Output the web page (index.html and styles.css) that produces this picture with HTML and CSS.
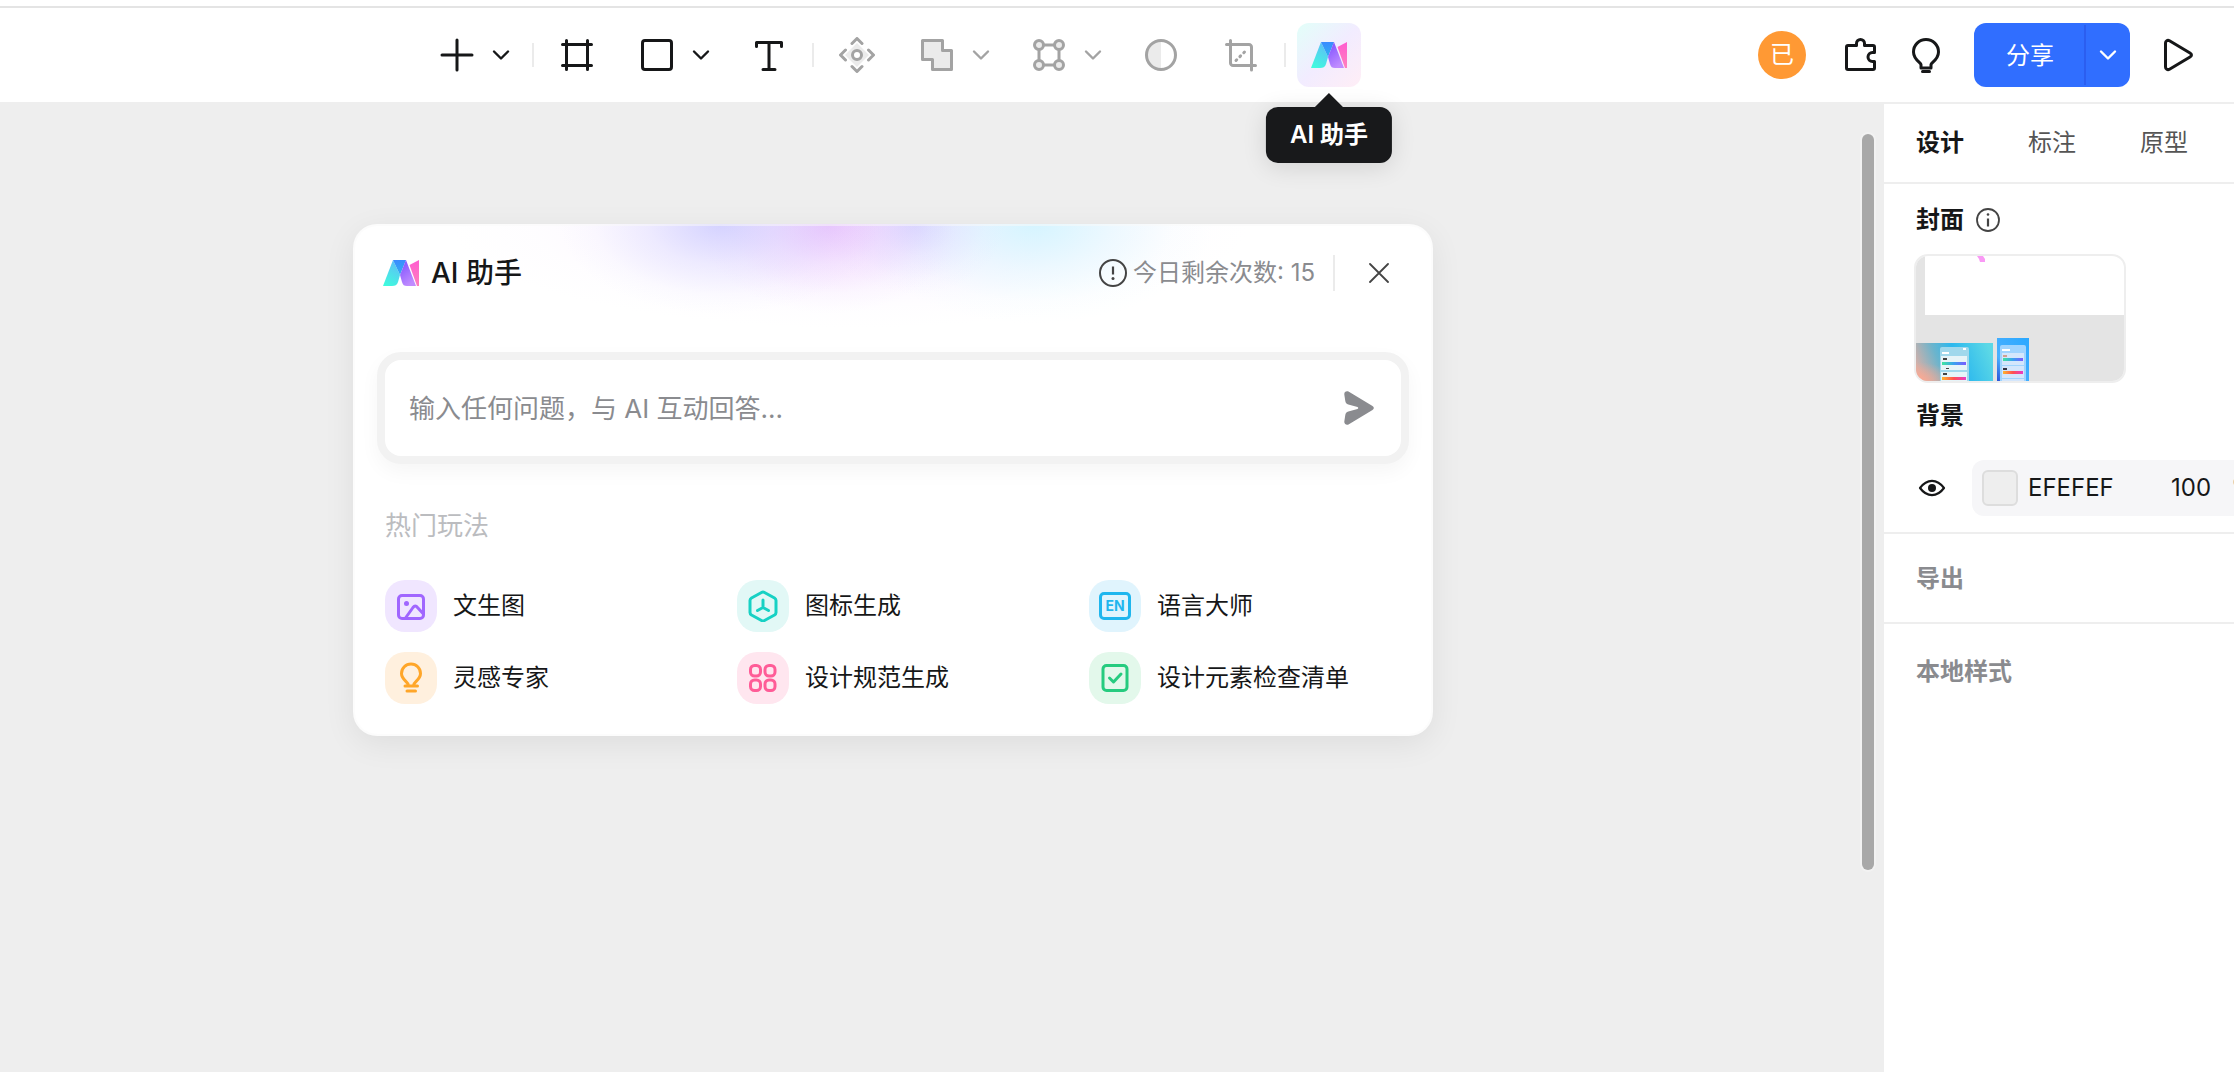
FILE: index.html
```html
<!DOCTYPE html>
<html lang="zh-CN">
<head>
<meta charset="utf-8">
<title>AI 助手</title>
<link rel="stylesheet" href="styles.css">
</head>
<body>
<svg class="defs" width="0" height="0" aria-hidden="true">
  <defs>
    <linearGradient id="g-left" x1="0" y1="1" x2="0.4" y2="0"><stop offset="0" stop-color="#3dffdc"/><stop offset="1" stop-color="#5cc4f5"/></linearGradient>
    <linearGradient id="g-top" x1="0" y1="0" x2="0" y2="1"><stop offset="0" stop-color="#3a8bff"/><stop offset="1" stop-color="#2fb0f0"/></linearGradient>
    <linearGradient id="g-mid" x1="0" y1="0" x2="0.5" y2="1"><stop offset="0" stop-color="#7a4dff"/><stop offset="1" stop-color="#c08cff"/></linearGradient>
    <linearGradient id="g-right" x1="0" y1="0" x2="0" y2="1"><stop offset="0" stop-color="#ff5cd0"/><stop offset="1" stop-color="#ff80bd"/></linearGradient>
    <symbol id="logo" viewBox="0 0 36 26">
      <path d="M10 0 0 26h9c3 0 5-1 6-4l2-7z" fill="url(#g-left)"/>
      <path d="M10 0h13l-6 15z" fill="url(#g-top)"/>
      <path d="M23 0 33 26h-9c-3 0-4-1-5-4l-2-7z" fill="url(#g-mid)"/>
      <path d="M36 0v26h-2L26.500 5z" fill="url(#g-right)"/>
    </symbol>
    <symbol id="chevron" viewBox="0 0 24 24">
      <path d="m5 8.500 7 7 7-7" fill="none" stroke="currentColor" stroke-width="2.400" stroke-linecap="round" stroke-linejoin="round"/>
    </symbol>
  </defs>
</svg>

<header class="topbar">
  <nav class="tools" aria-label="工具">
    <div class="split">
      <button class="tool" aria-label="添加"><svg width="36" height="36" viewBox="0 0 36 36"><path d="M18 3v30M3 18h30"/></svg></button>
      <button class="more" aria-label="更多添加"><svg width="24" height="24"><use href="#chevron"/></svg></button>
    </div>
    <span class="rule"></span>
    <button class="tool" aria-label="容器"><svg width="36" height="36" viewBox="0 0 36 36"><path d="M7.500 3.500v29M28.500 3.500v29M3.500 7.500h29M3.500 28.500h29"/></svg></button>
    <div class="split">
      <button class="tool" aria-label="矩形"><svg width="36" height="36" viewBox="0 0 36 36"><rect x="3.500" y="3.500" width="29" height="29" rx="2.500"/></svg></button>
      <button class="more" aria-label="更多形状"><svg width="24" height="24"><use href="#chevron"/></svg></button>
    </div>
    <button class="tool" aria-label="文本"><svg width="36" height="36" viewBox="0 0 36 36"><path d="M5.500 9.500v-4h25v4M18 5.500v27M12 32.500h12"/></svg></button>
    <span class="rule"></span>
    <button class="tool off" aria-label="组件"><svg width="36" height="36" viewBox="0 0 36 36"><path class="tint" d="M18 6 30 18 18 30 6 18z"/><circle cx="18" cy="18" r="4.500" class="blank"/><path d="m13 6.500 5-5 5 5M13 29.500l5 5 5-5M6.500 13l-5 5 5 5M29.500 13l5 5-5 5"/></svg></button>
    <div class="split">
      <button class="tool off" aria-label="布尔运算"><svg width="36" height="36" viewBox="0 0 36 36"><path class="fill" d="M3.500 3.500h20v10h9v19h-19v-10h-10z"/></svg></button>
      <button class="more off" aria-label="更多布尔运算"><svg width="24" height="24"><use href="#chevron"/></svg></button>
    </div>
    <div class="split">
      <button class="tool off" aria-label="编辑路径"><svg width="36" height="36" viewBox="0 0 36 36"><path d="M8 8h20v20H8z"/><circle class="fill" cx="8" cy="8" r="4.500"/><circle class="fill" cx="28" cy="8" r="4.500"/><circle class="fill" cx="8" cy="28" r="4.500"/><circle class="fill" cx="28" cy="28" r="4.500"/></svg></button>
      <button class="more off" aria-label="更多路径操作"><svg width="24" height="24"><use href="#chevron"/></svg></button>
    </div>
    <button class="tool off" aria-label="蒙版"><svg width="36" height="36" viewBox="0 0 36 36"><path class="tint" d="M18 3a15 15 0 0 0 0 30z"/><circle cx="18" cy="18" r="14.500"/></svg></button>
    <button class="tool off" aria-label="裁剪"><svg width="36" height="36" viewBox="0 0 36 36"><path d="M3.500 7.500H26a2.500 2.500 0 0 1 2.500 2.500v23M7.500 3.500V26a2.500 2.500 0 0 0 2.500 2.500h22.500"/><path d="M13 23.500 24.500 12" stroke-dasharray="1 4.500"/></svg></button>
    <span class="rule"></span>
    <div class="ai-tool">
      <button class="ai-button" aria-label="AI 助手"><svg width="36" height="26"><use href="#logo"/></svg></button>
      <span class="tooltip" role="tooltip">AI 助手</span>
    </div>
  </nav>
  <div class="actions">
    <span class="avatar">已</span>
    <button class="action" aria-label="插件"><svg width="36" height="36" viewBox="0 0 36 36"><path d="M6 8.500h8.500V6.500a4 4 0 0 1 8 0v2h8.500a1.500 1.500 0 0 1 1.500 1.500v5.500h-2a4.500 4.500 0 0 0 0 9h2V31a1.500 1.500 0 0 1-1.500 1.500H6A1.500 1.500 0 0 1 4.500 31V10A1.500 1.500 0 0 1 6 8.500z"/></svg></button>
    <button class="action" aria-label="帮助"><svg width="36" height="36" viewBox="0 0 36 36"><path d="M13 31v-3.500c0-1.500-7.500-5-7.500-12.500a12.500 12.500 0 0 1 25 0c0 7.500-7.500 11-7.500 12.500V31zM14.500 34.500h7"/></svg></button>
    <div class="share">
      <button class="share-main">分享</button>
      <button class="share-more" aria-label="分享选项"><svg width="24" height="24"><use href="#chevron"/></svg></button>
    </div>
    <button class="action" aria-label="演示"><svg width="36" height="36" viewBox="0 0 36 36"><path d="M5.500 6v24c0 2 2 3.300 4 2.200L30 20c2-1.200 2-2.800 0-4L9.500 3.800C7.500 2.700 5.500 4 5.500 6z"/></svg></button>
  </div>
</header>

<div class="workspace">
  <main class="canvas">
    <section class="card" aria-labelledby="ai-title">
      <div class="card-head">
        <svg width="36" height="26"><use href="#logo"/></svg>
        <h1 class="card-title" id="ai-title">AI 助手</h1>
        <span class="quota"><svg width="28" height="28" viewBox="0 0 28 28"><circle cx="14" cy="14" r="13" fill="none" stroke="#444" stroke-width="2"/><path d="M14 7.500v8" stroke="#444" stroke-width="2.200"/><circle cx="14" cy="19.500" r="1.500" fill="#444"/></svg>今日剩余次数: 15</span>
        <span class="head-rule"></span>
        <button class="close" aria-label="关闭"><svg width="20" height="20" viewBox="0 0 20 20"><path d="M1 1l18 18M19 1 1 19" stroke="#444" stroke-width="1.800" stroke-linecap="round"/></svg></button>
      </div>
      <form class="ask">
        <input class="ask-input" type="text" aria-label="问题" placeholder="输入任何问题，与 AI 互动回答...">
        <button class="send" type="button" aria-label="发送"><svg width="32" height="36" viewBox="0 0 32 36"><path d="M5.500 1.600 29.500 16c1.800 1.200 1.800 2.800 0 4L5.500 34.400C3.500 35.400 1 34 1.300 31.600L2.300 25c.3-1.800 1.200-3.100 3-3.500L14.500 19c1-.4 1-1.600 0-2L5.300 14.500c-1.800-.4-2.700-1.700-3-3.500L1.300 4.400C1 2 3.500.6 5.500 1.600z" fill="#8a8b8f"/></svg></button>
      </form>
      <h2 class="hot">热门玩法</h2>
      <div class="plays">
        <button class="play"><span class="tile purple"><svg width="32" height="32" viewBox="0 0 32 32"><rect x="3.500" y="5.500" width="25" height="23" rx="3.500"/><circle cx="11.500" cy="13.500" r="2.500" fill="currentColor" stroke="none"/><path d="m10.500 28 7.500-10.500c1.500-2 3-2 4.500 0l5.500 6"/></svg></span>文生图</button>
        <button class="play"><span class="tile teal"><svg width="32" height="32" viewBox="0 0 32 32"><path d="M14.500 2.500 4.500 8Q3 9 3 10.500v12Q3 24 4.500 25l10 5.500q1.500.8 3 0l10-5.500q1.500-1 1.500-2.500v-12Q29 9 27.500 8l-10-5.500q-1.500-.8-3 0zM16 10v7.500M10.500 20.500l5.500-3 5.500 3"/></svg></span>图标生成</button>
        <button class="play"><span class="tile blue"><svg width="32" height="32" viewBox="0 0 32 32"><rect x="1.500" y="3.500" width="29" height="25" rx="3.500"/><text class="en" x="16" y="21">EN</text></svg></span>语言大师</button>
        <button class="play"><span class="tile orange"><svg width="32" height="32" viewBox="0 0 32 32"><path d="M13.500 23.500c0-4-7-5.500-7-12a9.500 9.500 0 0 1 19 0c0 6.500-7 8-7 12M10 24h12.500M12 29h8.500"/></svg></span>灵感专家</button>
        <button class="play"><span class="tile pink"><svg width="32" height="32" viewBox="0 0 32 32"><rect x="3.500" y="3.500" width="10" height="10.500" rx="4"/><rect x="18" y="3.500" width="10" height="10.500" rx="4"/><rect x="3.500" y="18" width="10" height="10.500" rx="4"/><rect x="18" y="18" width="10" height="10.500" rx="4"/></svg></span>设计规范生成</button>
        <button class="play"><span class="tile green"><svg width="32" height="32" viewBox="0 0 32 32"><rect x="4" y="3.500" width="24" height="25" rx="3.500"/><path d="m10.500 16 4 4 7.500-8"/></svg></span>设计元素检查清单</button>
      </div>
    </section>
    <span class="scroll-thumb"></span>
  </main>

  <aside class="panel">
    <div class="tabs">
      <button class="tab on">设计</button>
      <button class="tab">标注</button>
      <button class="tab">原型</button>
    </div>
    <section class="group page">
      <h2 class="group-title">封面 <svg width="24" height="24" viewBox="0 0 24 24"><circle cx="12" cy="12" r="11" fill="none" stroke="#444" stroke-width="1.800"/><circle cx="12" cy="6.500" r="1.300" fill="#444"/><path d="M12 10.500v8" stroke="#444" stroke-width="2.200"/></svg></h2>
      <div class="cover">
        <svg width="208" height="125" viewBox="0 0 208 125">
          <defs>
            <linearGradient id="c-a" x1="0" y1="0.600" x2="1" y2="0.400"><stop offset="0" stop-color="#d6b0a8"/><stop offset="0.300" stop-color="#6cb4cc"/><stop offset="0.550" stop-color="#2cb8ee"/><stop offset="1" stop-color="#5cd8e6"/></linearGradient>
            <radialGradient id="c-b" cx="0" cy="1" r="0.500"><stop offset="0" stop-color="#ffa890"/><stop offset="1" stop-color="#ffa890" stop-opacity="0"/></radialGradient>
            <linearGradient id="c-c" x1="1" y1="0" x2="0" y2="1"><stop offset="0" stop-color="#2aa8ff"/><stop offset="0.700" stop-color="#4ab0ff"/><stop offset="1" stop-color="#2a50d8"/></linearGradient>
            <linearGradient id="c-cool"><stop offset="0" stop-color="#3fe6a0"/><stop offset="0.500" stop-color="#3aa0f0"/><stop offset="1" stop-color="#7a5cff"/></linearGradient>
            <linearGradient id="c-warm"><stop offset="0" stop-color="#ffb52e"/><stop offset="0.500" stop-color="#ff4f50"/><stop offset="1" stop-color="#e83cc8"/></linearGradient>
          </defs>
          <path fill="#e4e4e4" d="M0 0h208v125H0z"/>
          <path fill="#fff" d="M9 0h199v59H9z"/>
          <path fill="#f99af5" d="M61 0h6l2 3v3h-5l-1-3z"/>
          <path fill="url(#c-a)" d="M0 87h77v38H0z"/><path fill="url(#c-b)" d="M0 87h77v38H0z"/>
          <path fill="#a0d8ec" d="M24 93q0-2 2-2h25q2 0 2 2v32H24z"/>
          <path fill="#e6f4f8" d="M25 100h26v14H25zM25 116h26v9H25z"/>
          <path fill="#fff" d="M26 96h7v2h-7zM47 92h3v2h-3z"/>
          <path fill="#444" d="M27 102h4v2h-4zM27 117h4v2h-4zM30 112h3v1h-3z"/>
          <path fill="url(#c-cool)" d="M26 106h24v3H26z"/><path fill="url(#c-warm)" d="M26 121h24v3H26z"/>
          <path fill="url(#c-c)" d="M81 82h32v43H81z"/>
          <path fill="#a0d4ff" d="M84 91q0-2 2-2h22q2 0 2 2v34H84z"/>
          <path fill="#d4e6fc" d="M86 97h22v12H86zM86 110h22v12H86zM86 123h22v2H86z"/>
          <path fill="#fff" d="M86 93h8v2h-8z"/>
          <path fill="#d0a090" d="M87 99h4v2h-4z"/><path fill="#334" d="M87 112h4v2h-4z"/>
          <path fill="url(#c-cool)" d="M87 102h20v3H87z"/><path fill="url(#c-warm)" d="M87 115h20v3H87z"/>
        </svg>
      </div>
      <h2 class="group-title">背景</h2>
      <div class="fill-row">
        <button class="eye" aria-label="显示背景"><svg width="28" height="20" viewBox="0 0 28 20"><path d="M2 10c7-9.500 17-9.500 24 0-7 9.500-17 9.500-24 0z" fill="none" stroke="#161718" stroke-width="2.200" stroke-linejoin="round"/><circle cx="14" cy="10" r="4" fill="#161718"/></svg></button>
        <div class="field">
          <button class="swatch" aria-label="背景颜色"></button>
          <input class="hex" type="text" aria-label="色值" value="EFEFEF">
          <input class="alpha" type="text" aria-label="不透明度" value="100">
          <span class="unit">%</span>
        </div>
      </div>
    </section>
    <section class="group"><h2 class="group-title muted">导出</h2></section>
    <section class="group last"><h2 class="group-title muted">本地样式</h2></section>
  </aside>
</div>
</body>
</html>
```

FILE: styles.css
```css
* { box-sizing: border-box; }

body {
  margin: 0;
  height: 100vh;
  display: flex;
  flex-direction: column;
  overflow: hidden;
  background: #fff;
  color: #161718;
  font: 24px/36px Inter, "Noto Sans CJK SC", sans-serif;
}

button, input { font: inherit; color: inherit; border: 0; background: none; padding: 0; margin: 0; }
button { cursor: pointer; display: flex; align-items: center; justify-content: center; }
h1, h2 { margin: 0; font-size: inherit; }
svg { display: block; flex: none; }
.defs { position: absolute; }

/* Top bar */
.topbar {
  margin-top: 6px;
  border-top: 2px solid #e4e4e4;
  border-bottom: 2px solid #eee;
  padding: 15px 38px 15px 28px;
  display: flex;
  align-items: center;
}
.tools { flex: 1; display: flex; align-items: center; justify-content: center; gap: 16px; }
.split { display: flex; padding-right: 8px; }
.tool { width: 64px; height: 64px; }
.more { width: 24px; height: 64px; }
.tool svg, .action svg {
  fill: none;
  stroke: currentColor;
  stroke-width: 3;
  stroke-linecap: round;
  stroke-linejoin: round;
}
.off { color: #a3a3a3; }
.tool .fill { fill: #ebebeb; }
.tool .tint { fill: #ebebeb; stroke: none; }
.tool .blank { fill: #fff; }
.rule { width: 2px; height: 24px; margin: 0 -5px; background: #ebebeb; }

.ai-tool { position: relative; z-index: 2; }
.ai-button {
  width: 64px;
  height: 64px;
  border-radius: 12px;
  background: linear-gradient(135deg, #e2fff9, #f2ecff 50%, #ffeef6);
}
.tooltip {
  position: absolute;
  top: 84px;
  left: 50%;
  transform: translateX(-50%);
  padding: 10px 24px;
  border-radius: 12px;
  background: #18191b;
  color: #fff;
  font-weight: 600;
  white-space: nowrap;
  box-shadow: 0 4px 24px rgba(0, 0, 0, 0.12);
}
.tooltip::before {
  content: "";
  position: absolute;
  bottom: 100%;
  left: 50%;
  margin-left: -14px;
  border: 14px solid transparent;
  border-top: 0;
  border-bottom-color: #18191b;
}

.actions { display: flex; align-items: center; gap: 30px; }
.avatar {
  width: 48px;
  height: 48px;
  margin-right: 6px;
  border-radius: 50%;
  background: #ff9934;
  color: #fff;
  line-height: 48px;
  text-align: center;
}
.action { width: 36px; height: 64px; }
.share { display: flex; height: 64px; border-radius: 12px; background: #306eff; color: #fff; }
.share-main { width: 110px; padding: 2px 0 0 2px; }
.share-more { position: relative; width: 46px; padding-left: 2px; }
.share-more::before { content: ""; position: absolute; left: 0; top: 2px; bottom: 2px; width: 2px; background: #2b5ef0; }

/* Workspace */
.workspace { flex: 1; display: flex; min-height: 0; }
.canvas { position: relative; flex: 1; min-width: 0; padding: 120px 98px 0 0; background: #eee; }
.scroll-thumb {
  position: absolute;
  top: 30px;
  right: 10px;
  width: 12px;
  height: 76%;
  border-radius: 6px;
  background: #a8a8a8;
  box-shadow: 0 0 0 2px #f2f2f2;
}

/* Assistant card */
.card {
  max-width: 1080px;
  margin: 0 auto;
  padding: 22px 22px 30px;
  border: 2px solid rgba(250, 250, 250, 0.5);
  border-radius: 24px;
  box-shadow: 0 8px 32px rgba(0, 0, 0, 0.07);
  background:
    radial-gradient(ellipse 160px 90px at 34% 0, rgba(200, 200, 255, 0.75), rgba(200, 200, 255, 0.28) 45%, rgba(200, 200, 255, 0.06) 78%, rgba(200, 200, 255, 0)),
    radial-gradient(ellipse 130px 90px at 44% 0, rgba(230, 184, 252, 0.75), rgba(230, 184, 252, 0.28) 45%, rgba(230, 184, 252, 0.06) 78%, rgba(230, 184, 252, 0)),
    radial-gradient(ellipse 90px 70px at 52% 0, rgba(206, 208, 255, 0.7), rgba(206, 208, 255, 0.26) 45%, rgba(206, 208, 255, 0.06) 78%, rgba(206, 208, 255, 0)),
    radial-gradient(ellipse 180px 100px at 63% 0, rgba(200, 244, 255, 0.75), rgba(200, 244, 255, 0.3) 45%, rgba(200, 244, 255, 0.06) 78%, rgba(200, 244, 255, 0)),
    radial-gradient(ellipse 400px 104px at 46% 0, rgba(246, 232, 255, 0.7), rgba(246, 232, 255, 0.35) 50%, rgba(246, 232, 255, 0.08) 80%, rgba(246, 232, 255, 0)),
    #fff;
  background-origin: border-box;
}
.card-head { display: flex; align-items: center; height: 50px; padding: 0 20px 0 6px; }
.card-title { flex: 1; margin-left: 12px; font-size: 28px; font-weight: 500; }
.quota { display: flex; align-items: center; gap: 6px; color: #8a8b8f; }
.head-rule { width: 2px; height: 36px; margin: 0 34px 0 18px; background: #ebebeb; }
.close { width: 20px; height: 36px; }

.ask {
  display: flex;
  align-items: center;
  height: 112px;
  margin-top: 54px;
  padding: 0 24px;
  border: 8px solid #f2f2f2;
  border-radius: 24px;
  background: #fff;
  box-shadow: 0 8px 20px rgba(0, 0, 0, 0.04);
}
.ask-input { flex: 1; min-width: 0; height: 64px; font-size: 26px; outline: 0; }
.ask-input::placeholder { color: #8a8b8f; opacity: 1; }
.send { width: 36px; height: 64px; }

.hot { margin: 44px 8px 0; font-size: 26px; font-weight: 400; color: #bbbcbf; }
.plays { display: grid; grid-template-columns: repeat(3, 1fr); gap: 20px 40px; margin: 36px 8px 0; }
.play { justify-content: flex-start; gap: 16px; white-space: nowrap; }
.tile { display: grid; place-items: center; width: 52px; height: 52px; border-radius: 20px; }
.tile svg { fill: none; stroke: currentColor; stroke-width: 3px; stroke-linecap: round; stroke-linejoin: round; }
.purple { background: #f0e6ff; color: #a066ff; }
.teal { background: #e2f8f6; color: #17d1c4; }
.blue { background: #e0f4fd; color: #1fb6ee; }
.orange { background: #fff0de; color: #ffa629; }
.pink { background: #ffe6ef; color: #ff5c97; }
.green { background: #e3f8eb; color: #26cb7f; }
.tile .en { fill: currentColor; stroke: none; font: 700 14px Inter, sans-serif; text-anchor: middle; }

/* Side panel */
.panel { width: 350px; flex: none; background: #fff; overflow: hidden; }
.tabs { display: flex; gap: 64px; padding: 21px 32px; border-bottom: 2px solid #eee; }
.tab { color: #555; white-space: nowrap; }
.tab.on { color: #161718; font-weight: 600; }
.group { padding: 27px 32px 25px; border-bottom: 2px solid #eee; }
.group.page { padding: 18px 0 16px 32px; }
.group.last { padding-top: 30px; border: 0; }
.group-title { display: flex; align-items: center; gap: 12px; font-weight: 600; }
.muted { color: #8a8b8f; }
.cover {
  width: 212px;
  margin: 16px 0 15px -2px;
  border: 2px solid #eee;
  border-radius: 14px;
  overflow: hidden;
}
.fill-row { display: flex; align-items: center; gap: 24px; margin-top: 26px; }
.eye { width: 32px; height: 36px; flex: none; }
.field {
  display: flex;
  align-items: center;
  flex: none;
  width: 320px;
  height: 56px;
  padding: 0 10px;
  border-radius: 12px;
  background: #f6f6f8;
}
.swatch { width: 36px; height: 36px; flex: none; border: 2px solid #ddd; border-radius: 6px; background: #eee; }
.hex { width: 143px; margin-left: 10px; }
.alpha { width: 60px; }
.unit { color: #8a8b8f; }
```
